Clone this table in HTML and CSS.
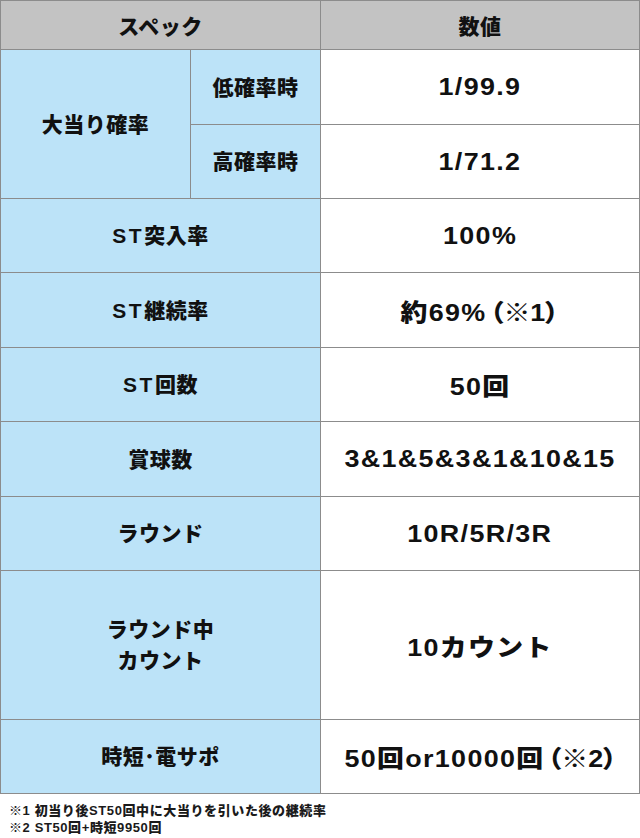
FILE: index.html
```html
<!DOCTYPE html>
<html lang="ja">
<head>
<meta charset="utf-8">
<link rel="stylesheet" href="styles.css">
</head>
<body>
<div class="spec">
  <div class="cell head span2">スペック</div>
  <div class="cell head">数値</div>

  <div class="cell label rowspan2">大当り確率</div>
  <div class="cell label">低確率時</div>
  <div class="cell value"><span class="v">1/99.9</span></div>
  <div class="cell label">高確率時</div>
  <div class="cell value"><span class="v">1/71.2</span></div>

  <div class="cell label span2"><span class="lt">ST</span>突入率</div>
  <div class="cell value"><span class="v">100%</span></div>

  <div class="cell label span2"><span class="lt">ST</span>継続率</div>
  <div class="cell value"><span class="v">約69%<span class="paren">（※1）</span></span></div>

  <div class="cell label span2"><span class="lt">ST</span>回数</div>
  <div class="cell value"><span class="v">50回</span></div>

  <div class="cell label span2">賞球数</div>
  <div class="cell value"><span class="v">3&amp;1&amp;5&amp;3&amp;1&amp;10&amp;15</span></div>

  <div class="cell label span2">ラウンド</div>
  <div class="cell value"><span class="v">10R/5R/3R</span></div>

  <div class="cell label span2">ラウンド中<br>カウント</div>
  <div class="cell value"><span class="v">10カウント</span></div>

  <div class="cell label span2">時短･電サポ</div>
  <div class="cell value"><span class="v">50回or10000回<span class="paren">（※2）</span></span></div>
</div>
<div class="notes">
  <p>※1 初当り後ST50回中に大当りを引いた後の継続率</p>
  <p>※2 ST50回+時短9950回</p>
</div>
</body>
</html>
```

FILE: styles.css
```css
html, body {
  margin: 0;
  padding: 0;
  background: #ffffff;
}

body {
  width: 640px;
  font-family: "Liberation Sans", "Noto Sans CJK JP", sans-serif;
  font-weight: 900;
  color: #111111;
}

.spec {
  display: grid;
  grid-template-columns: 189px 129px 318px;
  grid-template-rows: 48px 74px 73px 73px 74px 73px 74px 73px 148px 73px;
  gap: 1px;
  background: #8c8c8c;
  border: 1px solid #8c8c8c;
  width: 638px;
}

.cell {
  display: flex;
  align-items: center;
  justify-content: center;
  text-align: center;
}

.head {
  background: #c3c3c3;
  font-size: 21px;
  letter-spacing: 0.5px;
}

.label {
  background: #bce3f8;
  font-size: 21px;
  letter-spacing: 0.5px;
  line-height: 31px;
}

.lt {
  letter-spacing: 2.5px;
}

.value {
  background: #ffffff;
  font-size: 24px;
}

.v {
  display: inline-block;
  letter-spacing: 1.2px;
  transform: scaleX(1.12);
  white-space: nowrap;
}

.paren {
  letter-spacing: 0;
  font-feature-settings: "palt";
  margin-left: 3px;
}

.span2 {
  grid-column: span 2;
}

.rowspan2 {
  grid-row: span 2;
}

.notes {
  padding: 8px 0 0 9px;
  font-size: 13px;
  line-height: 17px;
  letter-spacing: 0.6px;
  color: #1a1a1a;
}

.notes p {
  margin: 0;
}
```
